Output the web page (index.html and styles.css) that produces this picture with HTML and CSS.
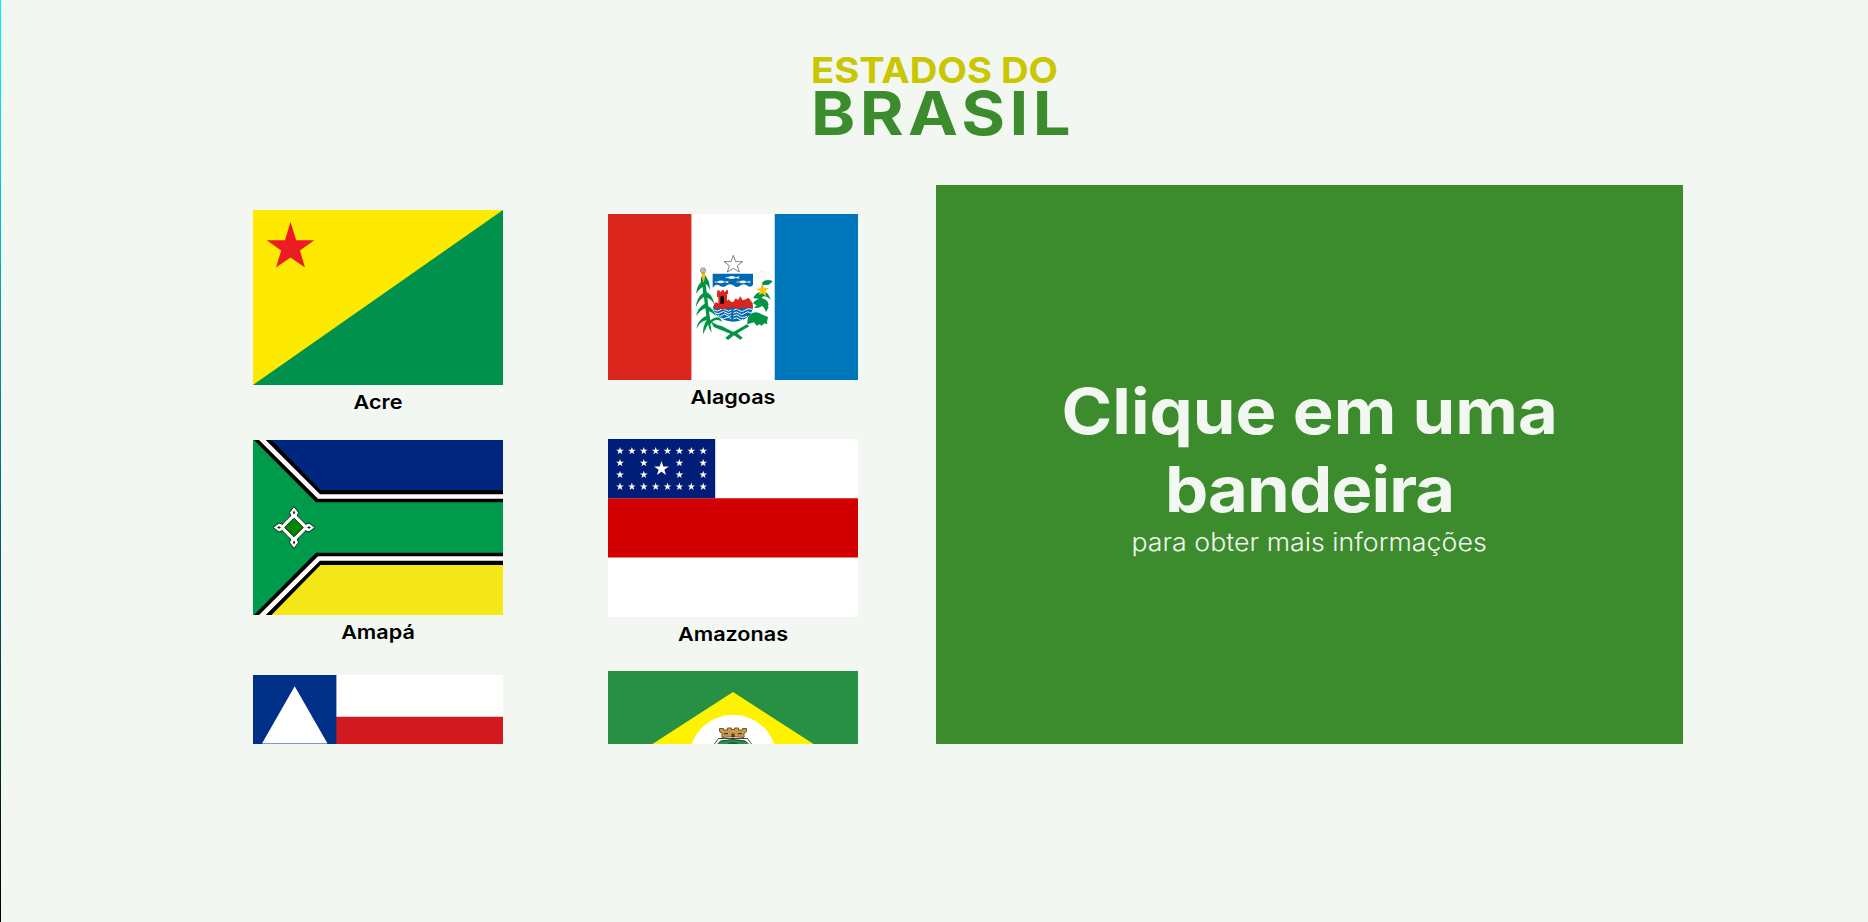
FILE: index.html
```html
<!DOCTYPE html>
<html lang="pt-BR">
<head>
<meta charset="utf-8">
<title>Estados do Brasil</title>
<link rel="stylesheet" href="styles.css">
</head>
<body>
<header class="header">
  <svg class="logo" viewBox="0 0 260 90" role="img" aria-label="Estados do Brasil">
    <text class="logo-top" x="-1" y="31" textLength="247" lengthAdjust="spacingAndGlyphs">ESTADOS DO</text>
    <text class="logo-bottom" x="-1" y="83" textLength="264" lengthAdjust="spacingAndGlyphs">BRASIL</text>
  </svg>
</header>
<main class="content">
  <section class="states">
    <figure class="state">
      <svg class="flag" width="250" height="175" viewBox="0 0 250 175">
        <path fill="#fdea00" d="M0 0H250V175H0z"/>
        <path fill="#00914d" d="M250 0V175H0z"/>
        <path fill="#ed1c24" d="M37.5 11.8L43.2 30.2H61.3L47 40.500 52 57.500 37.500 47.400 23 57.500 28.200 40.500 13.700 30.200H32z"/>
      </svg>
      <figcaption class="name">Acre</figcaption>
    </figure>
    <figure class="state state-alagoas">
      <svg class="flag" width="250" height="166" viewBox="0 0 250 166">
        <path fill="#fff" d="M0 0H250V166H0z"/>
        <path fill="#da261d" d="M0 0H83.4V166H0z"/>
        <path fill="#0077bb" d="M166.7 0H250V166H166.7z"/>
        <g transform="translate(77 31) scale(.33333)">
          <path fill="#fff" stroke="#444" stroke-width="2" d="M145 31L152 50 173 50 157 62 163 81 145 70 127 81 133 62 117 50 138 50z"/>
          <path fill="#0069b0" d="M83 86H204V120Q196 130 184 120 174 114 164 123 154 130 143 120 132 114 122 123 112 129 102 121 92 116 83 128z"/>
          <g fill="#e4f2fb"><path d="M122 95l6 2q14-8 24 0l12-4-3 4 3 4-12-2q-12 6-24 0l-7 1 3-3zM88 108l7 2q14-7 24 0l13-3-4 4 3 4-12-3q-12 6-24 0l-7 1 3-3zM154 108l7 2q14-7 24 0l13-3-4 4 3 4-12-3q-12 6-24 0l-7 1 3-3z"/></g>
          <path fill="#0069b0" d="M84 182H204Q202 226 143 230 86 224 84 182z"/>
          <g fill="none" stroke="#fff" stroke-width="3">
            <path d="M88 195q9 7 17 0t17 0 17 0M91 203q8 7 16 0t16 0 16 0M98 211q8 7 14 0t14 0 13 0M107 219q8 6 15 0t17 2"/>
            <path d="M145 196q9-8 17 0t17 0 22-3M145 205q9-8 17 0t17 0 18-2M145 213q9-8 17 0t24 1M145 222q9-8 17 0t12 0"/>
          </g>
          <path fill="#da261d" d="M97 136h7v4h5v-4h8v4h5v-4h7v11h-3v20l4-4 8 7 7 1 7-11 7 5 7-11 7 12 9-3 9-5 12 17 1 10-9 5-8-4-10 5-9-5-10 8-10-9-13 7-9-4-12 7-9-6-11 4-8-7 2-12 8-2 4 4v-20h-4z"/>
          <path fill="#160c0a" d="M106 176v-20q5-7 11 0v20z"/>
          <g fill="#009444">
            <path d="M48 98L53 90 62 92 72 110 76 136Q68 120 62 116L65 142Q82 148 88 178 78 162 67 158L70 184Q84 190 93 214 82 202 72 199L76 226Q100 206 112 230 96 221 84 229L76 238 80 264Q70 250 69 238L54 268Q53 243 65 226 46 228 34 252 38 224 64 212L61 190Q44 196 34 214 35 190 59 176L57 156Q42 164 32 188 35 158 54 144L53 126Q42 132 34 146 34 124 48 112z"/>
            <path d="M77 228Q96 242 110 243L145 261 186 238 193 244 157 265 173 278 166 284 147 271 129 285 121 278 136 266Q110 256 86 246z"/>
            <path d="M232 112q11-11 31-4-10 16-27 11l-7 17q19 1 29 29-13-13-23-11l-6 5q20 4 22 20l-3 5 3 3-8 14q-4-13-11-18-16 10-26 4l10-5-12-8q11-12 20-12l-20-3q11-18 22-18zM195 208q18-13 35 0l19 8-3 14 1 8-9-3-8 7-6-4-9 4-8-10-20 6q-2-18 8-30z"/>
          </g>
          <path fill="#f7b912" d="M49 82h12l-1 15-4 17-5-17z"/>
          <circle cx="54" cy="76" r="8" fill="#bbb" stroke="#444" stroke-width="2" stroke-dasharray="3 2"/>
          <path fill="#ffc40c" d="M232 115l5 13 14 2-9 8 1 16-11-9-10 5 3-12-13-6 16-3z"/>
          <path fill="none" stroke="#e9e9e9" stroke-width="2" d="M215 100q-8-9 3-13 0-9 11-7 10-2 12 7 7 6-2 12-11-5-24 1z"/>
        </g>
      </svg>
      <figcaption class="name">Alagoas</figcaption>
    </figure>
    <figure class="state state-amapa">
      <svg class="flag" width="250" height="175" viewBox="0 0 250 175">
        <path fill="#009a4b" d="M0 0H250V175H0z"/>
        <path fill="#002780" d="M17 0H250V51H67z"/>
        <path fill="#f4e718" d="M17 175H250V124H67z"/>
        <path d="M1 0H18.5L67.5 50H250V62.3H63zM1 175H18.5L67.5 125H250V112.7H63z"/>
        <path fill="#fffafc" d="M6 0H12.7L67 54.3H250V58.8H65zM6 175H12.7L67 120.7H250V116.2H65z"/>
        <g transform="translate(41 87.5)">
          <g fill="#fff" stroke="#062b17">
            <path d="M0-15L15 0 0 15-15 0z"/>
            <path d="M-3-11L-4.5-15 0-21 4.5-15 3-11"/>
            <path d="M-3 11L-4.5 15 0 21 4.5 15 3 11M-11-3L-15-4.5-21 0-15 4.5-11 3M11-3L15-4.5 21 0 15 4.5 11 3"/>
          </g>
          <path fill="#fff" d="M0-14L14 0 0 14-14 0z"/>
          <path fill="#008600" stroke="#04310c" d="M0-9.3L9.3 0 0 9.3-9.3 0z"/>
          <path fill="#14301f" d="M0-17l1.2 2-1.2 2-1.2-2zM0 17l1.2-2-1.2-2-1.2 2zM-17 0l2-1.2 2 1.2-2 1.2zM17 0l-2-1.2-2 1.2 2 1.2z"/>
        </g>
      </svg>
      <figcaption class="name">Amapá</figcaption>
    </figure>
    <figure class="state">
      <svg class="flag" width="250" height="178" viewBox="0 0 250 178">
        <defs><path id="star" d="M0-4L.95-1.2H3.9L1.5.5 2.4 3.3 0 1.6-2.4 3.3-1.5.5-3.9-1.2H-.95z"/></defs>
        <path fill="#fff" d="M0 0H250V178H0z"/>
        <path fill="#d20000" d="M0 59.3H250V118.6H0z"/>
        <path fill="#001d77" d="M0 0H107.2V59.3H0z"/>
        <g fill="#fff">
          <use href="#star" x="12" y="12"/><use href="#star" x="23.9" y="12"/><use href="#star" x="35.8" y="12"/><use href="#star" x="47.7" y="12"/><use href="#star" x="59.5" y="12"/><use href="#star" x="71.4" y="12"/><use href="#star" x="83.3" y="12"/><use href="#star" x="95.2" y="12"/>
          <use href="#star" x="12" y="23.9"/><use href="#star" x="35.8" y="23.9"/><use href="#star" x="71.4" y="23.9"/><use href="#star" x="95.2" y="23.9"/>
          <use href="#star" x="12" y="35.7"/><use href="#star" x="35.8" y="35.7"/><use href="#star" x="71.4" y="35.7"/><use href="#star" x="95.2" y="35.7"/>
          <use href="#star" x="12" y="47.6"/><use href="#star" x="23.9" y="47.6"/><use href="#star" x="35.8" y="47.6"/><use href="#star" x="47.7" y="47.6"/><use href="#star" x="59.5" y="47.6"/><use href="#star" x="71.4" y="47.6"/><use href="#star" x="83.3" y="47.6"/><use href="#star" x="95.2" y="47.6"/>
          <use href="#star" transform="translate(53.5 29.7) scale(1.9)"/>
        </g>
      </svg>
      <figcaption class="name">Amazonas</figcaption>
    </figure>
    <figure class="state">
      <svg class="flag" width="250" height="167" viewBox="0 0 250 167">
        <path fill="#fff" d="M0 0H250V167H0z"/>
        <path fill="#d31a20" d="M0 41.7H250V83.4H0zM0 125H250V167H0z"/>
        <path fill="#003087" d="M0 0H83.4V83.4H0z"/>
        <path fill="#fff" d="M41.7 11.3L74.5 68.5H9z"/>
      </svg>
      <figcaption class="name"></figcaption>
    </figure>
    <figure class="state">
      <svg class="flag" width="250" height="175" viewBox="0 0 250 175">
        <path fill="#289045" d="M0 0H250V175H0z"/>
        <path fill="#fff200" d="M125 21L228 87.5 125 154 22 87.5z"/>
        <circle cx="125" cy="87.5" r="43.7" fill="#fff"/>
        <path fill="#fff" stroke="#444" d="M105 75Q108 71 110.5 67.5H139.5Q142 71 145 75V110H105z"/>
        <path fill="#289045" stroke="#234a2f" d="M107.5 75Q111 72 112.5 70Q125 67 137.5 70Q139 72 142.5 75V108H107.5z"/>
        <path fill="#c79a50" stroke="#76552c" d="M111.5 57.5h4v1.5h4v-2h4v1.5h3v-1.5h4v2h4v-1.5h4v3l-2.5 2v4q-11-2-22 0v-4l-2.500-2z"/>
        <path fill="#5c3520" d="M123.5 66.5v-4h3v4zM116 62h4v1.200h-4zM130 62h4v1.200h-4z"/>
        <path fill="#1c5a32" d="M120 72.5q5-3 10 0v2h-10z"/>
      </svg>
      <figcaption class="name"></figcaption>
    </figure>
  </section>
  <section class="panel">
    <h1 class="title">Clique em uma<br><span class="title-end">bandeira</span></h1>
    <p class="subtitle">para obter mais informações</p>
  </section>
</main>
</body>
</html>
```
FILE: styles.css
```css
* {
  box-sizing: border-box;
  margin: 0;
  padding: 0;
}

body {
  height: 922px;
  overflow: hidden;
  background: #f2f7f2;
  font-family: Inter, "Liberation Sans", sans-serif;
  border-left: 1px solid;
  border-image: linear-gradient(#00f4ff 0%, #00e4ef 10%, #008289 45%, #002a2e 82%, #000 100%) 1;
}

.header {
  display: flex;
  justify-content: center;
  height: 185px;
  padding-top: 52px;
}

.logo {
  width: 260px;
  height: 90px;
  margin-left: 14px;
  overflow: visible;
}

.logo-top {
  fill: #cac600;
  font-size: 36px;
  font-weight: 650;
}

.logo-bottom {
  fill: #3c8b2c;
  font-size: 61px;
  font-weight: 700;
  letter-spacing: 4px;
}

.content {
  display: flex;
  width: 1494px;
  height: 559px;
  margin: 0 auto 0 188px;
}

.states {
  display: grid;
  grid-template-columns: 250px 250px;
  column-gap: 105px;
  row-gap: 24px;
  align-content: start;
  align-items: center;
  width: 747px;
  padding: 25px 0 0 64px;
  overflow: hidden;
}

.state-alagoas,
.state-amapa {
  padding-bottom: 1px;
}

.flag {
  display: block;
}

.name {
  height: 30px;
  font-size: 19.3px;
  font-weight: 600;
  line-height: 34px;
  text-align: center;
  color: #000;
  transform: scaleX(1.12);
}

.panel {
  display: flex;
  flex-direction: column;
  align-items: center;
  justify-content: center;
  width: 747px;
  background: #3c8b2c;
  color: #f2f7f2;
  text-align: center;
}

.title {
  font-size: 63px;
  font-weight: 700;
  line-height: 78px;
  transform: scaleX(1.09);
}

.title-end {
  letter-spacing: -0.8px;
}

.subtitle {
  margin-top: -2px;
  font-size: 25px;
  font-weight: 350;
  line-height: 32px;
  transform: scaleX(1.07);
}
```
